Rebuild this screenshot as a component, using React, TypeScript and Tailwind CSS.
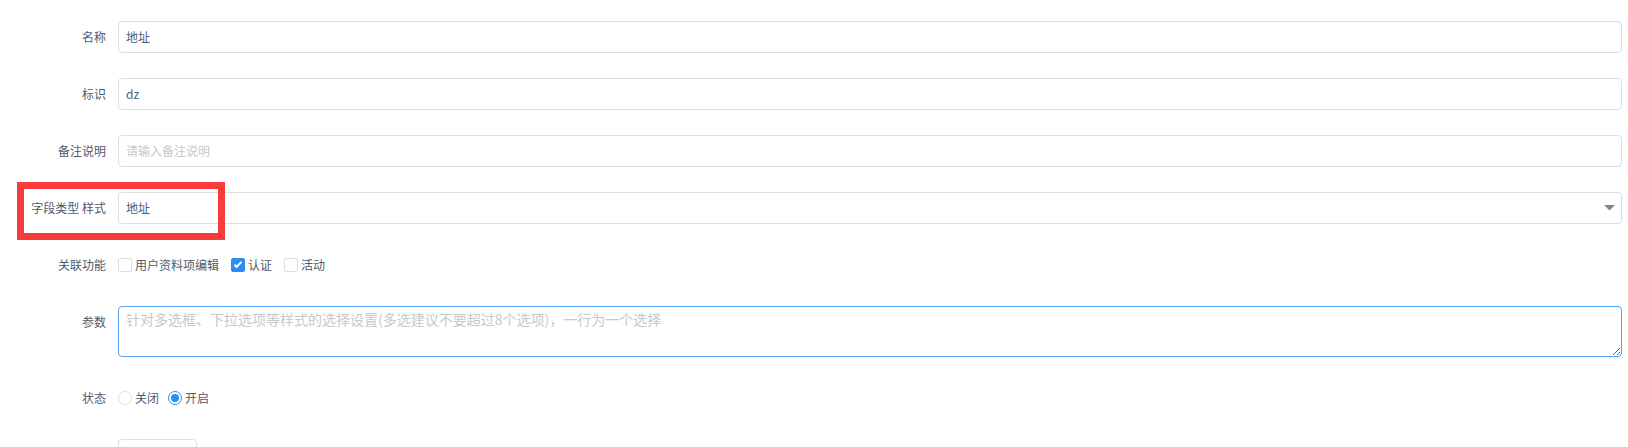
import React from "react";

const font = { fontFamily: '"Noto Sans CJK SC", "Liberation Sans", sans-serif' };

function Label({ children }: { children: React.ReactNode }) {
  return (
    <div className="w-[118px] shrink-0 pr-3 pt-[10px] pb-[10px] text-right text-[12px] leading-[12px] text-[#515a6e] whitespace-nowrap">
      {children}
    </div>
  );
}

function TextInput({ value, placeholder }: { value?: string; placeholder?: string }) {
  return (
    <div className="flex h-[32px] flex-1 items-center rounded-[4px] border border-[#dcdee2] bg-white px-[7px] text-[12px]">
      {value ? (
        <span className="text-[#515a6e]">{value}</span>
      ) : (
        <span className="text-[#c5c8ce]">{placeholder}</span>
      )}
    </div>
  );
}

function Checkbox({ checked, label }: { checked?: boolean; label: string }) {
  return (
    <div className="mr-[12px] flex items-center">
      {checked ? (
        <span className="flex h-[14px] w-[14px] items-center justify-center rounded-[2px] border border-[#2d8cf0] bg-[#2d8cf0]">
          <span className="mb-[2px] h-[8px] w-[4px] rotate-45 border-b-2 border-r-2 border-white" />
        </span>
      ) : (
        <span className="h-[14px] w-[14px] rounded-[2px] border border-[#dcdee2] bg-white" />
      )}
      <span className="ml-[3px] text-[12px] text-[#515a6e]">{label}</span>
    </div>
  );
}

function Radio({ checked, label }: { checked?: boolean; label: string }) {
  return (
    <div className="mr-[9px] flex items-center">
      {checked ? (
        <span className="flex h-[14px] w-[14px] items-center justify-center rounded-full border border-[#2d8cf0] bg-white">
          <span className="h-[8px] w-[8px] rounded-full bg-[#2d8cf0]" />
        </span>
      ) : (
        <span className="h-[14px] w-[14px] rounded-full border border-[#dcdee2] bg-white" />
      )}
      <span className="ml-[3px] text-[12px] text-[#515a6e]">{label}</span>
    </div>
  );
}

export default function App() {
  return (
    <div className="relative min-h-[447px] w-[1628px] bg-white" style={font}>
      <div className="flex flex-col gap-[25px] pt-[21px] pr-[6px]">
        <div className="flex items-start">
          <Label>名称</Label>
          <TextInput value="地址" />
        </div>
        <div className="flex items-start">
          <Label>标识</Label>
          <TextInput value="dz" />
        </div>
        <div className="flex items-start">
          <Label>备注说明</Label>
          <TextInput placeholder="请输入备注说明" />
        </div>
        <div className="flex items-start">
          <Label>字段类型 样式</Label>
          <div className="flex h-[32px] flex-1 items-center justify-between rounded-[4px] border border-[#dcdee2] bg-white pl-[7px] pr-[6px] text-[12px]">
            <span className="text-[#515a6e]">地址</span>
            <svg width="11" height="6" viewBox="0 0 11 6">
              <path d="M0 0 L11 0 L5.5 5.5 Z" fill="#808695" />
            </svg>
          </div>
        </div>
        <div className="flex items-start">
          <Label>关联功能</Label>
          <div className="flex h-[32px] items-center">
            <Checkbox label="用户资料项编辑" />
            <Checkbox checked label="认证" />
            <Checkbox label="活动" />
          </div>
        </div>
        <div className="flex items-start">
          <Label>参数</Label>
          <textarea
            className="block h-[51px] flex-1 resize-y rounded-[4px] border border-[#57a3f3] bg-white px-[7px] py-[3px] text-[14px] leading-[18px] text-[#515a6e] outline-none placeholder:text-[#c5c8ce]"
            style={font}
            placeholder="针对多选框、下拉选项等样式的选择设置(多选建议不要超过8个选项)，一行为一个选择"
          />
        </div>
        <div className="flex items-start">
          <Label>状态</Label>
          <div className="flex h-[32px] items-center">
            <Radio label="关闭" />
            <Radio checked label="开启" />
          </div>
        </div>
        <div className="flex items-start">
          <div className="w-[118px] shrink-0" />
          <div className="h-[32px] w-[79px] rounded-[4px] border border-[#dcdee2] bg-white" />
        </div>
      </div>
      <div className="pointer-events-none absolute left-[17px] top-[182px] h-[58px] w-[208px] border-[7px] border-[#f93b3b]" />
    </div>
  );
}
